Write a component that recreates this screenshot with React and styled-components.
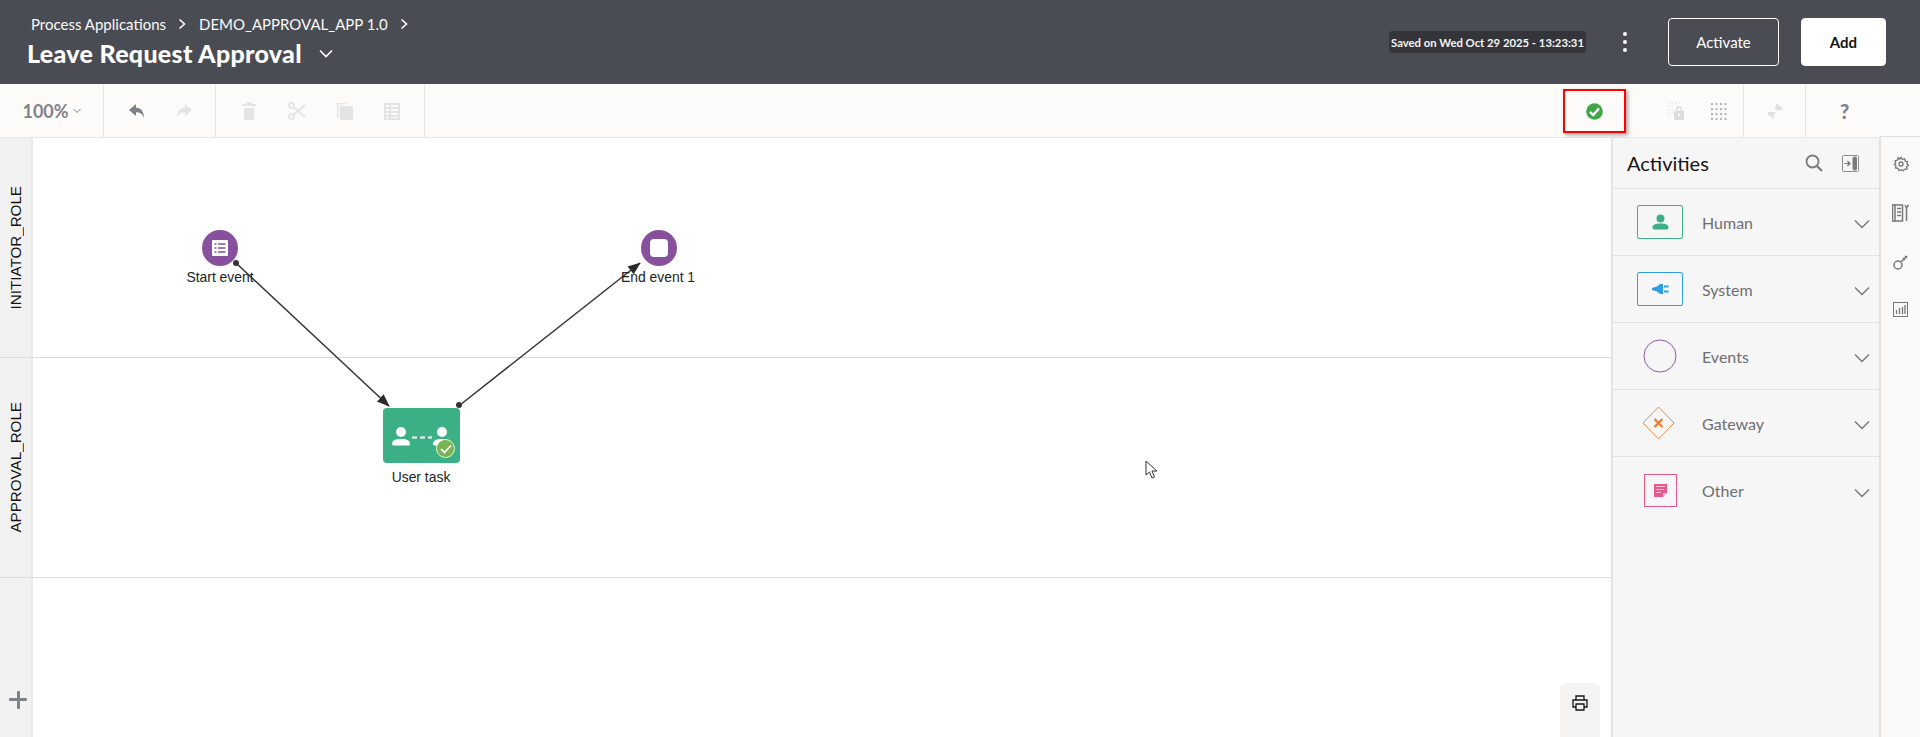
import React from "react";
import styled, { createGlobalStyle } from "styled-components";

const Global = createGlobalStyle`
  html, body { margin: 0; padding: 0; height: 100%; overflow: hidden; background: #fff; }
  #root { height: 100%; }
  * { box-sizing: border-box; }
`;
const Page = styled.div`
  width: 1920px; height: 737px; display: flex; flex-direction: column; overflow: hidden;
  font-family: Lato, "Open Sans", sans-serif;
`;
const Header = styled.header`
  height: 84px; flex: none; background: #4a4c54; color: #fff; display: flex; align-items: flex-start;
  justify-content: space-between;
`;
const TitleBlock = styled.div`
  padding: 14px 0 0 27px; display: flex; flex-direction: column;
`;
const Crumbs = styled.div`
  display: flex; align-items: center; height: 20px; padding-left: 4px; font-size: 15px; color: #fbf9f8;
`;
const CrumbSep = styled.svg`
  width: 10px; height: 12px; margin: 0 12px 0 11px; flex: none;
`;
const TitleRow = styled.div`
  display: flex; align-items: center; margin-top: 3px; height: 32px;
`;
const Title = styled.h1`
  margin: 0; font-size: 25px; font-weight: 900; letter-spacing: 0.3px; color: #fff; line-height: 32px;
`;
const HeaderRight = styled.div`
  display: flex; align-items: center; height: 48px; margin-top: 18px; padding-right: 34px;
`;
const Saved = styled.div`
  height: 22px; width: 197px; border-radius: 4px; background: #33353b; display: flex; align-items: center;
  justify-content: center; font-size: 11.3px; font-weight: 700; color: #f5f5f5; white-space: nowrap;
`;
const Dots = styled.div`
  display: flex; flex-direction: column; gap: 4px; margin: 0 41px 0 37px;
  span { width: 4px; height: 4px; border-radius: 50%; background: #fff; display: block; }
`;
const HeadButton = styled.button`
  width: ${p => p.$w}px; height: 48px; border-radius: 4px; font: inherit; font-size: 15px;
  font-weight: ${p => (p.$solid ? 700 : 400)};
  background: ${p => (p.$solid ? "#fff" : "transparent")};
  color: ${p => (p.$solid ? "#161513" : "#fff")};
  border: 1px solid #fff; margin-right: ${p => p.$mr || 0}px;
`;
const Toolbar = styled.div`
  height: 54px; flex: none; background: #fcfbfa; border-bottom: 1px solid #e9e8e6; display: flex; align-items: stretch;
`;
const ToolGroup = styled.div`
  display: flex; align-items: center; width: ${p => p.$w}px; flex: none;
  border-right: ${p => (p.$noLine ? "none" : "1px solid #e3e2e0")}; height: 52px; margin-top: 1px;
  justify-content: ${p => p.$justify || "flex-start"};
  padding-left: ${p => p.$pl || 0}px;
  gap: ${p => p.$gap || 0}px;
`;
const Zoom = styled.div`
  font-size: 18px; font-weight: 700; color: #7f8287; display: flex; align-items: center; gap: 4px;
`;
const Spacer = styled.div` flex: 1; `;
const Highlight = styled.div`
  width: 63px; height: 44px; margin: 5px 42px 0 0; flex: none; border: 2px solid #f00;
  box-shadow: 2px 2px 4px rgba(0,0,0,.35); display: flex; align-items: center; justify-content: center;
`;
const Main = styled.div` flex: 1; display: flex; min-height: 0; `;
const Canvas = styled.div`
  position: relative; width: 1611px; flex: none; display: flex; flex-direction: column; background: #fff;
`;
const Lane = styled.div`
  display: flex; height: ${p => (p.$h ? p.$h + "px" : "auto")}; flex: ${p => (p.$h ? "none" : 1)};
  border-bottom: ${p => (p.$h ? "1px solid #dddcdb" : "none")};
`;
const LaneHead = styled.div`
  width: 33px; flex: none; background: #f1f1f1; border-right: 2px solid #e9e9e9; display: flex;
  align-items: center; justify-content: center; position: relative;
`;
const LaneLabel = styled.span`
  writing-mode: vertical-rl; transform: rotate(180deg); font-family: "Liberation Sans", sans-serif;
  font-size: 15.2px; color: #111; white-space: nowrap;
`;
const AddLane = styled.div`
  position: absolute; left: 9px; top: 113px; width: 18px; height: 18px;
  &::before { content: ""; position: absolute; left: 0; right: 0; top: 7px; height: 3px; background: #7c8287; border-radius: 1px; }
  &::after { content: ""; position: absolute; top: 0; bottom: 0; left: 7.5px; width: 3px; background: #7c8287; border-radius: 1px; }
`;
const LaneBody = styled.div` flex: 1; `;
const Wires = styled.svg`
  position: absolute; left: 0; top: 0; width: 1611px; height: 599px; pointer-events: none;
`;
const NodeCircle = styled.div`
  position: absolute; left: ${p => p.$x}px; top: ${p => p.$y}px; width: 36px; height: 36px; border-radius: 50%;
  background: #86509c; display: flex; align-items: center; justify-content: center;
`;
const EndInner = styled.div`
  width: 18px; height: 18px; border-radius: 4px; background: #fff;
`;
const NodeLabel = styled.div`
  position: absolute; left: ${p => p.$x}px; top: ${p => p.$y}px; transform: translateX(-50%);
  font-family: "Liberation Sans", sans-serif; font-size: 13.9px; color: #222; white-space: nowrap; line-height: 16px;
`;
const TaskNode = styled.div`
  position: absolute; left: 383px; top: 270px; width: 77px; height: 55px; border-radius: 4px; background: #3cb085;
`;
const TaskBadge = styled.div`
  position: absolute; right: 5px; bottom: 5px; width: 19px; height: 19px; border-radius: 50%;
  background: #7ab356; border: 1px solid #e7f2df; display: flex; align-items: center; justify-content: center;
`;
const PrintButton = styled.div`
  position: absolute; left: 1560px; top: 545px; width: 40px; height: 54px; background: #f5f4f2;
  border-radius: 6px 6px 0 0; display: flex; justify-content: center; padding-top: 12px;
`;
const Cursor = styled.svg`
  position: absolute; left: 1145px; top: 322px; width: 14px; height: 20px;
`;
const Panel = styled.aside`
  width: 269px; flex: none; background: #f6f6f6; border-left: 2px solid #e4e4e4; border-right: 1px solid #e0e0e0;
  display: flex; flex-direction: column;
`;
const PanelHead = styled.div`
  height: 51px; flex: none; display: flex; align-items: center; padding: 0 20px 0 14px;
  border-bottom: 1px solid #e1e1e1;
`;
const PanelTitle = styled.h2`
  margin: 0; flex: 1; font-size: 20px; font-weight: 400; color: #161513;
`;
const PanelTools = styled.div` display: flex; align-items: center; gap: 19px; `;
const Row = styled.div`
  height: 67px; flex: none; display: flex; align-items: center; border-bottom: ${p => (p.$last ? "none" : "1px solid #e1e1e1")};
  position: relative;
`;
const RowIcon = styled.div`
  width: 46px; height: 34px; margin-left: 24px; flex: none; display: flex; align-items: center; justify-content: center;
  ${p => (p.$color ? `border: 1px solid ${p.$color}; border-radius: 2px;` : "")}
`;
const RowLabel = styled.div`
  margin-left: 19px; flex: 1; font-size: 16px; color: #6f6e71;
`;
const Chevron = styled.svg`
  width: 16px; height: 10px; margin: 4px 9px 0 0; flex: none;
`;
const Rail = styled.nav`
  width: 40px; flex: none; margin-top: -2px; background: #faf9f8; border-left: 1px solid #e0e0e0; border-top: 1px solid #e0e0e0;
  display: flex; flex-direction: column; align-items: center; padding-top: 19px; gap: 32px;
`;

const Sep = () => (
  <CrumbSep viewBox="0 0 10 12"><path d="M2.5 1.5 7.5 6l-5 4.5" fill="none" stroke="#fff" strokeWidth="1.6" /></CrumbSep>
);
const Down = ({ c = "#777", w = 16, h = 10, sw = 1.4 }) => (
  <svg width={w} height={h} viewBox="0 0 16 10"><path d="M1 1.5 8 8.5l7-7" fill="none" stroke={c} strokeWidth={sw} /></svg>
);

const Ic = {
  undo: c => <svg width="18" height="17" viewBox="0 0 18 17"><path d="M8 1 1 7l7 6V9.3c4 0 6.500 1.500 8 5.700C16 8.500 13 4.800 8 4.700z" fill={c} /></svg>,
  redo: c => <svg width="18" height="17" viewBox="0 0 18 17"><path d="M10 1l7 6-7 6V9.300c-4 0-6.500 1.500-8 5.700C2 8.500 5 4.800 10 4.700z" fill={c} /></svg>,
  trash: c => <svg width="16" height="18" viewBox="0 0 16 18"><path d="M6 0h4l1 2h4v2H1V2h4zM3 6h10v11a1 1 0 0 1-1 1H4a1 1 0 0 1-1-1z" fill={c} /></svg>,
  scissors: c => <svg width="18" height="18" viewBox="0 0 18 18" fill="none" stroke={c} strokeWidth="2"><circle cx="3.500" cy="3.500" r="2.500" /><circle cx="3.500" cy="14.500" r="2.500" /><path d="M5.500 5 17 15M5.500 13 17 3" /></svg>,
  copy: c => <svg width="16" height="18" viewBox="0 0 16 18"><path d="M0 1h9v1.500H1.500V16H0z" fill={c} /><path d="M3 4h13v14H3z" fill={c} /></svg>,
  table: c => <svg width="16" height="17" viewBox="0 0 16 17"><path fillRule="evenodd" d="M0 0h16v17H0zM2 2v2h3V2zm5 0v2h7V2zM2 6v2h3V6zm5 0v2h7V6zM2 10v2h3v-2zm5 0v2h7v-2zM2 14v1h3v-1zm5 0v1h7v-1z" fill={c} /></svg>,
  check: () => <svg width="17" height="17" viewBox="0 0 17 17"><circle cx="8.500" cy="8.500" r="8.300" fill="#3fa648" /><path d="M4 9l3.200 3L13 5.500" fill="none" stroke="#fff" strokeWidth="2.400" /></svg>,
  lockGrid: c => <svg width="16" height="18" viewBox="0 0 16 18"><g fill={c}><path d="M6 9h10v9H6z" /><path d="M8 9V7a3 3 0 0 1 6 0v2h-1.500V7a1.500 1.500 0 0 0-3 0v2z" /><path d="M0 0h1.500v1.500H0zM3.500 0H5v1.500H3.500zM7 0h1.500v1.500H7zM10.500 0H12v1.500h-1.500zM0 3.500h1.500V5H0zM3.500 3.500H5V5H3.500zM0 7h1.500v1.500H0zM3.500 7H5v1.500H3.500zM0 10.500h1.500V12H0zM3.500 10.500H5V12H3.500zM0 14h1.500v1.500H0z" opacity=".6" /></g><circle cx="11" cy="13" r="1.300" fill="#fcfbfa" /></svg>,
  grid: c => <svg width="16" height="18" viewBox="0 0 16 18" fill={c}>{[0, 1, 2, 3].flatMap(r => [0, 1, 2, 3].map(k => <rect key={r + "-" + k} x={k * 4.500} y={r * 5 + 1} width="2" height="2" />))}</svg>,
  collapse: c => <svg width="18" height="18" viewBox="0 0 18 18" fill={c}><path d="M11 1v4l5-0.500v2.500h-7zM7 17v-4l-5 .5V11h7z" /><path d="M9 8H17L11 1zM9 10H1l6 7z" /></svg>,
  search: () => <svg width="18" height="18" viewBox="0 0 18 18" fill="none" stroke="#7b7b7d" strokeWidth="1.800"><circle cx="7.500" cy="7.500" r="6" /><path d="M12 12l5 5" strokeWidth="2.200" /></svg>,
  dock: () => <svg width="17" height="17" viewBox="0 0 17 17"><rect x=".5" y=".5" width="16" height="16" rx="1" fill="none" stroke="#8a8a8c" /><rect x="10.500" y="1.500" width="4.500" height="14" rx="2" fill="#7b7b7d" /><path d="M2.500 8.500h5M5.500 6l2.500 2.500L5.500 11" fill="none" stroke="#6f6f71" strokeWidth="1.200" /></svg>,
  person: () => <svg width="17" height="16" viewBox="0 0 17 16" fill="#3cb085"><circle cx="8.500" cy="4.500" r="4" /><path d="M.5 13.500c0-3 3-4 8-4s8 1 8 4c0 1.500-1 2-2 2H2.500c-1 0-2-.5-2-2z" /></svg>,
  plug: () => <svg width="17" height="12" viewBox="0 0 17 12" fill="#2d9fe0"><path d="M0 5l5-1.500L8 1h3v10H8L5 8.500 0 7z" /><path d="M12 2.500h4.500v2H12zM12 7.500h4.500v2H12z" /></svg>,
  diamond: () => <svg width="34" height="34" viewBox="0 0 34 34" style={{ marginLeft: "-2px" }}><path d="M16.500 1 32 17 16.500 33 1 17z" fill="none" stroke="#f08a45" strokeWidth="1" /><path d="M12.500 13l8 8M20.500 13l-8 8" stroke="#ed7d31" strokeWidth="2.400" /></svg>,
  circle: () => <svg width="34" height="34" viewBox="0 0 34 34"><circle cx="17" cy="17" r="16" fill="none" stroke="#8d5ba6" strokeWidth="1" /></svg>,
  note: () => <svg width="33" height="33" viewBox="0 0 33 33"><rect x=".5" y=".5" width="32" height="32" fill="none" stroke="#e8588c" /><path d="M10 10h13v9l-4 4h-9z" fill="#e8588c" /><path d="M12 12.500h9M12 15.500h8M12 18.500h5" stroke="#fbd" strokeWidth="1" /><path d="M19 23l4-4h-4z" fill="#f7c2d6" /></svg>,
  gear: () => <svg width="16" height="16" viewBox="0 0 24 24" fill="none" stroke="#77777a" strokeWidth="2"><path d="M12 2l2 3 3.500-.8.800 3.500 3.500.8-.8 3.500 2 2-2.500 2 .5 3.500-3.500.5L15 22l-3-1.500L9 22l-1.500-3.500-3.500-.5.500-3.500-2.500-2 2-2-.8-3.500 3.500-.8L7.500 2.700 10 5z" /><circle cx="12" cy="12" r="3" /></svg>,
  docs: () => <svg width="17" height="18" viewBox="0 0 17 18"><path d="M.5 1h10v16H.5z" fill="none" stroke="#77777a" strokeWidth="1.500" /><path d="M3 .5v17" stroke="#77777a" strokeWidth="1.500" /><path d="M5 4.500h4M5 8h4M5 11.500h4" stroke="#77777a" strokeWidth="1.300" /><path d="M13 1l1.500 3L16.500 1M14.500 4v13" fill="none" stroke="#77777a" strokeWidth="1.500" /></svg>,
  key: () => <svg width="16" height="16" viewBox="0 0 16 16" fill="none" stroke="#77777a" strokeWidth="1.500"><circle cx="5" cy="11" r="4" /><path d="M8 8l6-6M12 2l2 2M10 4l2 2" /></svg>,
  chart: () => <svg width="15" height="15" viewBox="0 0 15 15" fill="none" stroke="#77777a"><rect x=".5" y=".5" width="14" height="14" /><path d="M3.500 12V8M6.500 12V6M9.500 12V5M12 12V3" strokeWidth="1.300" /></svg>,
  print: () => <svg width="16" height="16" viewBox="0 0 16 16" fill="none" stroke="#161513" strokeWidth="1.300"><path d="M4 5V1h8v4M4 12H1V5h14v7h-3" /><path d="M4 9h8v6H4z" /></svg>,
};

const rows = [
  { label: "Human", color: "#3cb085", icon: Ic.person },
  { label: "System", color: "#2d9fe0", icon: Ic.plug },
  { label: "Events", icon: Ic.circle },
  { label: "Gateway", icon: Ic.diamond },
  { label: "Other", icon: Ic.note },
];

export default function App() {
  return (
    <Page>
      <Global />
      <Header>
        <TitleBlock>
          <Crumbs>Process Applications<Sep />DEMO_APPROVAL_APP 1.0<Sep /></Crumbs>
          <TitleRow>
            <Title>Leave Request Approval</Title>
            <svg width="14" height="9" viewBox="0 0 14 9" style={{ marginLeft: 17 }}><path d="M1 1.500 7 7.500l6-6" fill="none" stroke="#fff" strokeWidth="1.600" /></svg>
          </TitleRow>
        </TitleBlock>
        <HeaderRight>
          <Saved>Saved on Wed Oct 29 2025 - 13:23:31</Saved>
          <Dots><span /><span /><span /></Dots>
          <HeadButton $w={111} $mr={22}>Activate</HeadButton>
          <HeadButton $w={85} $solid>Add</HeadButton>
        </HeaderRight>
      </Header>
      <Toolbar>
        <ToolGroup $w={104} $justify="center">
          <Zoom>100%<svg width="8" height="6" viewBox="0 0 8 6"><path d="M.5 1 4 4.500 7.500 1" fill="none" stroke="#7f8287" /></svg></Zoom>
        </ToolGroup>
        <ToolGroup $w={112} $pl={24} $gap={29}>{Ic.undo("#7e8185")}{Ic.redo("#e3e3e3")}</ToolGroup>
        <ToolGroup $w={209} $pl={25} $gap={31}>{Ic.trash("#e4e4e4")}{Ic.scissors("#e4e4e4")}{Ic.copy("#e4e4e4")}{Ic.table("#e4e4e4")}</ToolGroup>
        <Spacer />
        <Highlight>{Ic.check()}</Highlight>
        <ToolGroup $w={75} $noLine $pl={0} $gap={27}>{Ic.lockGrid("#dcdcdc")}{Ic.grid("#b5b5b5")}</ToolGroup>
        <ToolGroup $w={63} $justify="center" style={{ borderLeft: "1px solid #e3e2e0" }}>{Ic.collapse("#e0e0e0")}</ToolGroup>
        <ToolGroup $w={114} $noLine $pl={34}><span style={{ fontSize: 20, fontWeight: 900, color: "#7f8287", fontFamily: "Lato" }}>?</span></ToolGroup>
      </Toolbar>
      <Main>
        <Canvas>
          <Lane $h={220}><LaneHead><LaneLabel>INITIATOR_ROLE</LaneLabel></LaneHead><LaneBody /></Lane>
          <Lane $h={220}><LaneHead><LaneLabel>APPROVAL_ROLE</LaneLabel></LaneHead><LaneBody /></Lane>
          <Lane><LaneHead><AddLane /></LaneHead><LaneBody /></Lane>
          <Wires viewBox="0 0 1611 599">
            <defs>
              <marker id="arrow" markerWidth="14" markerHeight="12" refX="12" refY="5" orient="auto" markerUnits="userSpaceOnUse">
                <path d="M0 0 13 5 0 10z" fill="#2b2b2b" />
              </marker>
            </defs>
            <line x1="236" y1="125" x2="389" y2="268" stroke="#333" strokeWidth="1.500" markerEnd="url(#arrow)" />
            <circle cx="236" cy="125" r="3" fill="#333" />
            <line x1="460" y1="267" x2="640" y2="125" stroke="#333" strokeWidth="1.500" markerEnd="url(#arrow)" />
            <circle cx="459" cy="267" r="3" fill="#333" />
          </Wires>
          <NodeCircle $x={202} $y={92}>
            <svg width="16" height="16" viewBox="0 0 16 16"><rect width="16" height="16" rx="1" fill="#fff" /><path d="M2.500 4h2M2.500 8h2M2.500 12h2M6 4h7.500M6 8h7.500M6 12h7.500" stroke="#86509c" strokeWidth="1.500" /></svg>
          </NodeCircle>
          <NodeLabel $x={220} $y={131}>Start event</NodeLabel>
          <NodeCircle $x={641} $y={92}><EndInner /></NodeCircle>
          <NodeLabel $x={658} $y={131}>End event 1</NodeLabel>
          <TaskNode>
            <svg width="77" height="55" viewBox="0 0 77 55">
              <g fill="#fff"><circle cx="18" cy="24" r="5" /><path d="M9 36c0-4 4-5 9-5s9 1 9 5c0 .8-.5 1.500-1.500 1.500h-15C9.500 37.500 9 36.800 9 36z" /><circle cx="59" cy="24" r="5" /><path d="M50 36c0-4 4-5 9-5s9 1 9 5c0 .8-.5 1.500-1.500 1.500h-15c-1 0-1.500-.7-1.500-1.500z" /><path d="M29 28.500h5v2h-5zM37 28.500h5v2h-5zM45 28.500h4v2h-4z" /></g>
            </svg>
            <TaskBadge><svg width="12" height="10" viewBox="0 0 12 10"><path d="M1 5l3.500 3.500L11 1.500" fill="none" stroke="#fff" strokeWidth="1.800" /></svg></TaskBadge>
          </TaskNode>
          <NodeLabel $x={421} $y={331}>User task</NodeLabel>
          <PrintButton>{Ic.print()}</PrintButton>
          <Cursor viewBox="0 0 14 20"><path d="M1 1v14l3.500-3 2.500 6 2.500-1-2.500-6h5z" fill="#fff" stroke="#333" strokeWidth="1" /></Cursor>
        </Canvas>
        <Panel>
          <PanelHead>
            <PanelTitle>Activities</PanelTitle>
            <PanelTools>{Ic.search()}{Ic.dock()}</PanelTools>
          </PanelHead>
          {rows.map((r, i) => (
            <Row key={r.label} $last={i === rows.length - 1}>
              <RowIcon $color={r.color}>{r.icon()}</RowIcon>
              <RowLabel>{r.label}</RowLabel>
              <Chevron viewBox="0 0 16 10"><path d="M1 1.500 8 8.500l7-7" fill="none" stroke="#777" strokeWidth="1.400" /></Chevron>
            </Row>
          ))}
        </Panel>
        <Rail>{Ic.gear()}{Ic.docs()}{Ic.key()}{Ic.chart()}</Rail>
      </Main>
    </Page>
  );
}
